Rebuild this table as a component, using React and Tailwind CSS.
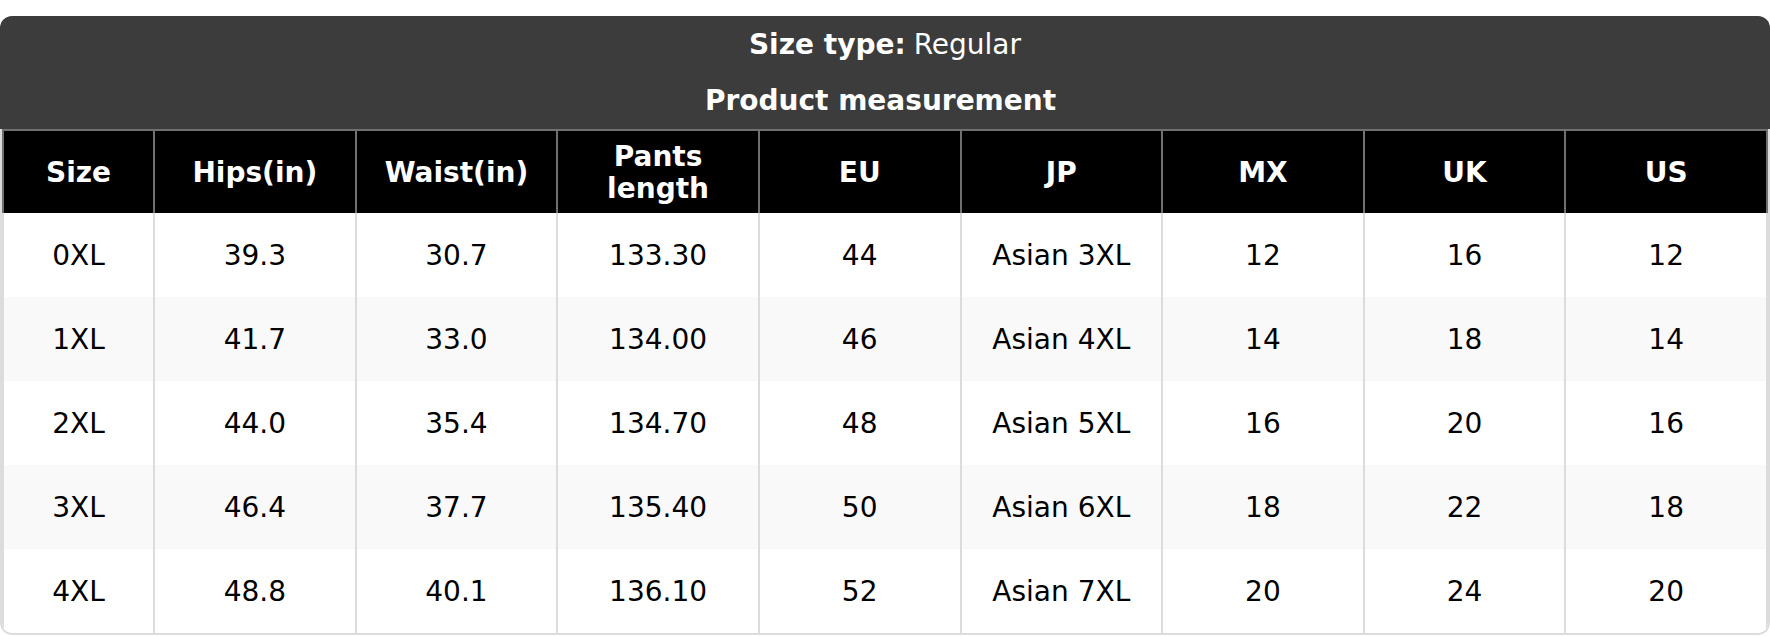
import React from 'react';

const columns = ['Size', 'Hips(in)', 'Waist(in)', 'Pants length', 'EU', 'JP', 'MX', 'UK', 'US'];

const rows = [
    ['0XL', '39.3', '30.7', '133.30', '44', 'Asian 3XL', '12', '16', '12'],
    ['1XL', '41.7', '33.0', '134.00', '46', 'Asian 4XL', '14', '18', '14'],
    ['2XL', '44.0', '35.4', '134.70', '48', 'Asian 5XL', '16', '20', '16'],
    ['3XL', '46.4', '37.7', '135.40', '50', 'Asian 6XL', '18', '22', '18'],
    ['4XL', '48.8', '40.1', '136.10', '52', 'Asian 7XL', '20', '24', '20'],
];

const SizeChart = () => {
    return (
        <div className="rounded-[12px] overflow-hidden">
            <div className="bg-[#3c3c3c] text-white">
                <div className="h-[56px] flex items-center justify-center pt-[2px]">
                    <span className="font-bold">Size type:</span>
                    <span className="ml-[8px]">Regular</span>
                </div>
                <div className="h-[57px] flex items-center justify-center font-bold pr-[9px]">
                    Product measurement
                </div>
            </div>
            <div className="border-x-2 border-b-2 border-[#dcdcdc] rounded-b-[12px] overflow-hidden">
                <table className="w-full table-fixed border-collapse">
                    <colgroup>
                        <col className="w-[151px]" />
                        {columns.slice(1).map((c) => (
                            <col key={c} />
                        ))}
                    </colgroup>
                    <thead>
                        <tr>
                            {columns.map((c) => (
                                <th
                                    key={c}
                                    className="h-[83px] pt-[1px] bg-black text-white font-bold leading-[32px] border-t-2 border-x-2 border-[#707070] px-2"
                                >
                                    {c === 'Pants length' ? (
                                        <>
                                            Pants
                                            <br />
                                            length
                                        </>
                                    ) : (
                                        c
                                    )}
                                </th>
                            ))}
                        </tr>
                    </thead>
                    <tbody>
                        {rows.map((row, i) => (
                            <tr key={row[0]} className={i % 2 === 1 ? 'bg-[#f9f9f9]' : 'bg-white'}>
                                {row.map((cell, j) => (
                                    <td
                                        key={j}
                                        className="h-[84px] pt-[2px] text-center text-black border-x-2 border-[#dcdcdc] px-2"
                                    >
                                        {cell}
                                    </td>
                                ))}
                            </tr>
                        ))}
                    </tbody>
                </table>
            </div>
        </div>
    );
};

const App = () => {
    return (
        <div className="bg-white pt-[16px] text-[28px] font-['DejaVu_Sans',sans-serif]">
            <SizeChart />
        </div>
    );
};

export default App;
